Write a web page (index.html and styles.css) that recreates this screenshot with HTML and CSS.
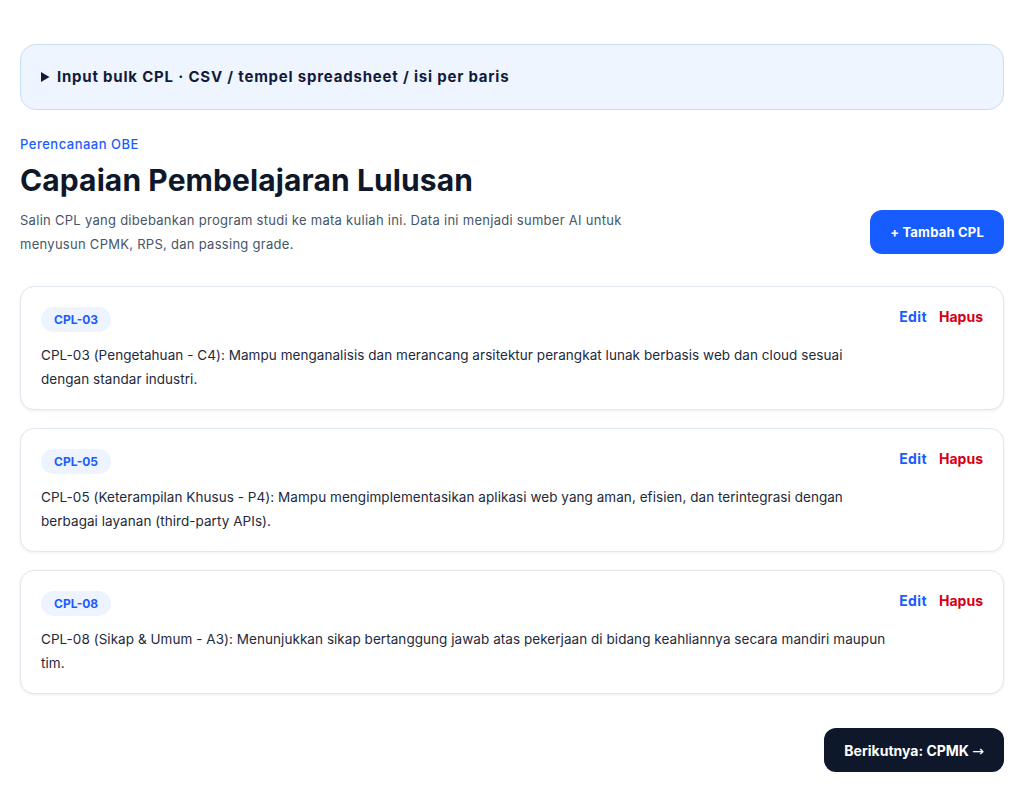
FILE: index.html
```html
<!DOCTYPE html>
<html lang="id">
<head>
    <meta charset="UTF-8">
    <meta name="viewport" content="width=device-width, initial-scale=1.0">
    <title>Capaian Pembelajaran Lulusan</title>
    <link rel="stylesheet" href="styles.css">
</head>
<body>
    <div class="page">
        <details class="bulk">
            <summary>Input bulk CPL · CSV / tempel spreadsheet / isi per baris</summary>
        </details>

        <section class="intro">
            <p class="eyebrow">Perencanaan OBE</p>
            <h1>Capaian Pembelajaran Lulusan</h1>
            <div class="intro-row">
                <p class="lead">Salin CPL yang dibebankan program studi ke mata kuliah ini. Data ini menjadi sumber AI untuk menyusun CPMK, RPS, dan passing grade.</p>
                <button class="btn btn-primary">+ Tambah CPL</button>
            </div>
        </section>

        <div class="cpl-list">
            <div class="cpl-card">
                <div class="cpl-body">
                    <span class="badge">CPL-03</span>
                    <p>CPL-03 (Pengetahuan - C4): Mampu menganalisis dan merancang arsitektur perangkat lunak berbasis web dan cloud sesuai dengan standar industri.</p>
                </div>
                <div class="actions">
                    <a href="#" class="edit">Edit</a>
                    <a href="#" class="delete">Hapus</a>
                </div>
            </div>
            <div class="cpl-card">
                <div class="cpl-body">
                    <span class="badge">CPL-05</span>
                    <p>CPL-05 (Keterampilan Khusus - P4): Mampu mengimplementasikan aplikasi web yang aman, efisien, dan terintegrasi dengan berbagai layanan (third-party APIs).</p>
                </div>
                <div class="actions">
                    <a href="#" class="edit">Edit</a>
                    <a href="#" class="delete">Hapus</a>
                </div>
            </div>
            <div class="cpl-card">
                <div class="cpl-body">
                    <span class="badge">CPL-08</span>
                    <p>CPL-08 (Sikap &amp; Umum - A3): Menunjukkan sikap bertanggung jawab atas pekerjaan di bidang keahliannya secara mandiri maupun tim.</p>
                </div>
                <div class="actions">
                    <a href="#" class="edit">Edit</a>
                    <a href="#" class="delete">Hapus</a>
                </div>
            </div>
        </div>

        <div class="footer-row">
            <button class="btn btn-dark">Berikutnya: CPMK <span class="arrow">→</span></button>
        </div>
    </div>
</body>
</html>
```

FILE: styles.css
```css
body {
    margin: 0;
    font-family: Inter, "Noto Sans", sans-serif;
    background-color: #fff;
    color: #0f172a;
}

.page {
    padding: 44px 20px 20px;
}

.bulk {
    background-color: #eef5ff;
    border: 1px solid #c9dcf7;
    border-radius: 16px;
    padding: 21px 20px;
}

.bulk summary {
    font-size: 15px;
    font-weight: 700;
    letter-spacing: 0.8px;
    color: #121b3a;
    cursor: pointer;
    line-height: 22px;
}

.intro {
    margin-top: 25px;
}

.eyebrow {
    margin: 0;
    font-size: 13px;
    font-weight: 500;
    letter-spacing: 0.5px;
    color: #1a5cff;
    line-height: 18px;
}

h1 {
    margin: 8px 0 9px;
    font-size: 30px;
    font-weight: 700;
    letter-spacing: 0.1px;
    line-height: 38px;
}

.intro-row {
    display: flex;
    justify-content: space-between;
    align-items: center;
}

.lead {
    margin: 0;
    max-width: 630px;
    font-size: 13px;
    letter-spacing: 0.28px;
    line-height: 24px;
    color: #475569;
}

.btn {
    border: none;
    border-radius: 12px;
    height: 44px;
    padding: 0 20px;
    font-family: inherit;
    font-size: 13px;
    font-weight: 700;
    color: #fff;
    cursor: pointer;
}

.btn-primary {
    background-color: #175cff;
    letter-spacing: 0.2px;
}

.btn-dark {
    background-color: #0f172a;
    font-size: 14px;
}

.btn-dark .arrow {
    font-family: "DejaVu Sans", sans-serif;
    font-weight: 400;
}

.cpl-list {
    margin-top: 30px;
    display: flex;
    flex-direction: column;
    gap: 18px;
}

.cpl-card {
    display: flex;
    justify-content: space-between;
    align-items: flex-start;
    border: 1px solid #e2e8f0;
    border-radius: 14px;
    padding: 20px 20px 18px;
    box-shadow: 0 1px 3px rgba(15, 23, 42, 0.08);
    background-color: #fff;
}

.cpl-body {
    max-width: 848px;
}

.badge {
    display: inline-block;
    padding: 4px 13px;
    border-radius: 999px;
    background-color: #eef4ff;
    color: #1a5cff;
    font-size: 12px;
    font-weight: 700;
    line-height: 17px;
}

.cpl-body p {
    margin: 11px 0 0;
    font-size: 13.5px;
    letter-spacing: 0.05px;
    line-height: 24px;
    color: #1e293b;
}

.actions {
    display: flex;
    gap: 12px;
    padding-top: 1px;
}

.actions a {
    font-size: 14px;
    font-weight: 700;
    text-decoration: none;
}

.actions .edit {
    color: #1a5cff;
    letter-spacing: 0.4px;
}

.actions .delete {
    color: #d70015;
}

.footer-row {
    display: flex;
    justify-content: flex-end;
    margin-top: 34px;
}
```
